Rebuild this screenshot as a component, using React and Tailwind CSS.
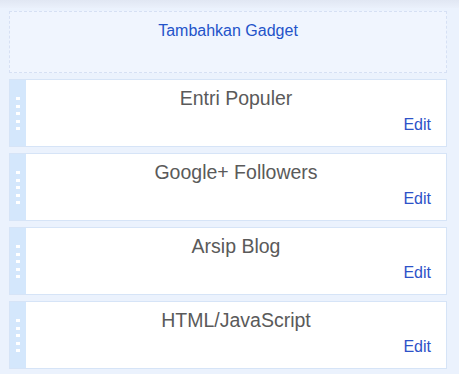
import React from 'react';

const gadgets = ['Entri Populer', 'Google+ Followers', 'Arsip Blog', 'HTML/JavaScript'];

const Handle = () => (
  <div className="w-[16px] flex-shrink-0 bg-[#d4e7fc] flex flex-col items-center pt-[17px] gap-[4.5px]">
    {[0, 1, 2, 3, 4].map((i) => (
      <span key={i} className="block w-[4px] h-[3px] bg-white" />
    ))}
  </div>
);

const GadgetCard = ({ title }) => (
  <div className="h-[68px] flex bg-white border border-[#d6e4f7]">
    <Handle />
    <div className="flex-1 flex flex-col pt-[7.5px]">
      <h3 className="text-center text-[19.5px] leading-[20px] text-[#5a5a5a]">{title}</h3>
      <div className="flex justify-end pr-[15px] mt-[9px]">
        <a className="text-[16px] leading-[16px] text-[#2d52c8] cursor-pointer">Edit</a>
      </div>
    </div>
  </div>
);

export default function App() {
  return (
    <div
      className="w-[459px] h-[374px] overflow-hidden bg-[#ebf2fd]"
      style={{ fontFamily: '"Liberation Sans", Arial, sans-serif' }}
    >
      <div className="h-[8px] bg-gradient-to-b from-[#e1e7f3] to-[#eaf0fb]" />
      <div className="pl-[9px] pr-[12px] pt-[3px] flex flex-col gap-[6px]">
        <div className="h-[62px] border border-dashed border-[#d6e0f4] bg-[#f0f5fe] pt-[7px] text-center">
          <a className="text-[16px] leading-[16px] text-[#2353c9] cursor-pointer">Tambahkan Gadget</a>
        </div>
        {gadgets.map((g) => (
          <GadgetCard key={g} title={g} />
        ))}
      </div>
    </div>
  );
}
